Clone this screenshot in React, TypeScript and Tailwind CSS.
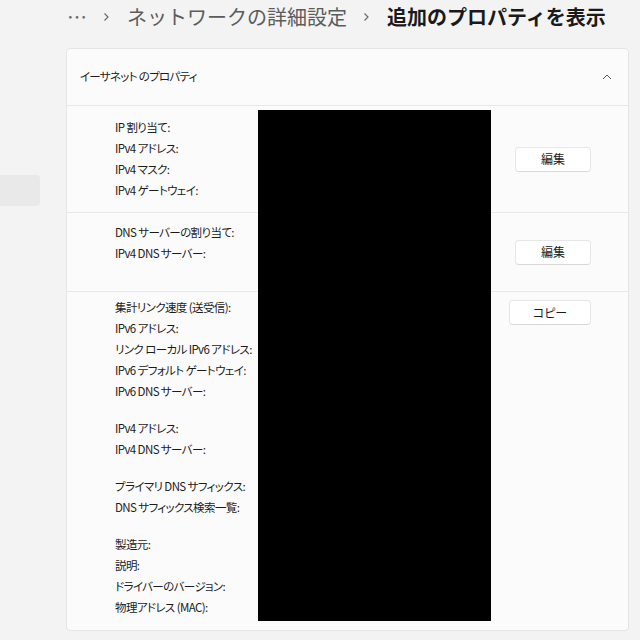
import React from 'react'

const font = { fontFamily: '"Noto Sans CJK JP", "Noto Sans", sans-serif' }

function Chevron() {
  return (
    <svg width="8" height="10" viewBox="0 0 8 10" className="ml-[15px] mr-[17px]">
      <path d="M2.5 1.5 L6 5 L2.5 8.5" fill="none" stroke="#6b6b6b" strokeWidth="1.2" />
    </svg>
  )
}

function Button({ label, w }: { label: string; w: string }) {
  return (
    <div
      className={`${w} h-[25px] flex items-center justify-center rounded-[4px] bg-white border border-[#e6e6e6] border-b-[#d8d8d8] text-[12px] text-[#1b1b1b] [font-feature-settings:'palt']`}
    >
      {label}
    </div>
  )
}

function Group({ items, first }: { items: string[]; first?: boolean }) {
  return (
    <div className={first ? '' : 'mt-[16px]'}>
      {items.map((t) => (
        <div
          key={t}
          className="h-[21px] leading-[21px] text-[11.5px] text-[#1b1b1b] whitespace-nowrap [font-feature-settings:'palt'] tracking-[-0.6px]"
        >
          {t}
        </div>
      ))}
    </div>
  )
}

export default function App() {
  return (
    <div className="w-[640px] h-[640px] bg-[#f3f3f3] overflow-hidden flex" style={font}>
      {/* サイドバー */}
      <div className="w-[66px] shrink-0">
        <div className="mt-[175px] w-[40px] h-[31px] bg-[#e9e9e9] rounded-r-[4px]" />
      </div>

      <div className="flex flex-col">
        {/* パンくず */}
        <div className="h-[48px] flex items-start pt-[2px] whitespace-nowrap">
          <span className="text-[20px] leading-[30px] text-[#6b6b6b] ml-[1px]">…</span>
          <span className="h-[30px] flex items-center"><Chevron /></span>
          <span className="text-[20px] leading-[30px] text-[#5c5c5c]">ネットワークの詳細設定</span>
          <span className="h-[30px] flex items-center"><Chevron /></span>
          <span className="text-[20px] leading-[30px] text-[#1a1a1a] font-semibold">追加のプロパティを表示</span>
        </div>

        {/* カード */}
        <div className="relative w-[563px] h-[583px] bg-[#fbfbfb] border border-[#e5e5e5] rounded-[4px]">
          <div className="h-[57px] flex items-center justify-between pl-[13px] pr-[16px] border-b border-[#e8e8e8]">
            <span className="text-[11.5px] text-[#1b1b1b] [font-feature-settings:'palt'] tracking-[-0.7px]">イーサネット のプロパティ</span>
            <svg width="10" height="6" viewBox="0 0 10 6">
              <path d="M1 5 L5 1 L9 5" fill="none" stroke="#5a5a5a" strokeWidth="1" />
            </svg>
          </div>

          <div className="h-[107px] flex items-center justify-between pl-[48px] pr-[37px] border-b border-[#e8e8e8]">
            <Group first items={['IP 割り当て:', 'IPv4 アドレス:', 'IPv4 マスク:', 'IPv4 ゲートウェイ:']} />
            <Button label="編集" w="w-[76px]" />
          </div>

          <div className="h-[79px] flex items-center justify-between pl-[48px] pr-[37px] border-b border-[#e8e8e8]">
            <div className="self-start pt-[9px]">
              <Group first items={['DNS サーバーの割り当て:', 'IPv4 DNS サーバー:']} />
            </div>
            <Button label="編集" w="w-[76px]" />
          </div>

          <div className="flex justify-between pl-[48px] pr-[37px] pt-[5px]">
            <div>
              <Group
                first
                items={[
                  '集計リンク速度 (送受信):',
                  'IPv6 アドレス:',
                  'リンク ローカル IPv6 アドレス:',
                  'IPv6 デフォルト ゲートウェイ:',
                  'IPv6 DNS サーバー:',
                ]}
              />
              <Group items={['IPv4 アドレス:', 'IPv4 DNS サーバー:']} />
              <Group items={['プライマリ DNS サフィックス:', 'DNS サフィックス検索一覧:']} />
              <Group items={['製造元:', '説明:', 'ドライバーのバージョン:', '物理アドレス (MAC):']} />
            </div>
            <div className="pt-[3px]">
              <Button label="コピー" w="w-[82px]" />
            </div>
          </div>

          {/* 伏せ字 */}
          <div className="absolute left-[191px] top-[61px] w-[233px] h-[511px] bg-black" />
        </div>
      </div>
    </div>
  )
}
